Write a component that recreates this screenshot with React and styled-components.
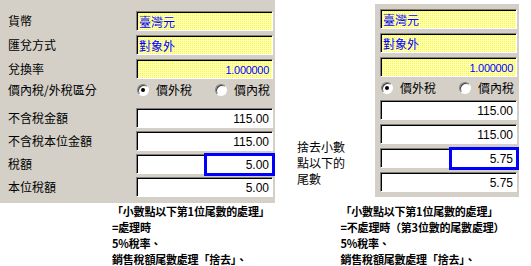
import React from "react";
import styled, { createGlobalStyle } from "styled-components";

const GlobalStyle = createGlobalStyle`
  html, body { margin: 0; padding: 0; background: #ffffff; }
  body { font-family: "Noto Sans CJK TC", "Noto Sans", sans-serif; color: #000; }
`;

const Page = styled.div`
  width: 531px;
  height: 266px;
  overflow: hidden;
  background: #fff;
  display: flex;
  flex-direction: column;
`;

const Top = styled.div`
  display: flex;
  height: 203px;
  flex: none;
  align-items: flex-start;
`;

const Panel = styled.div`
  flex: none;
  background: #d4d0c8;
  width: ${(p) => p.$width}px;
  height: ${(p) => p.$height}px;
  margin-top: ${(p) => p.$offset}px;
  padding: ${(p) => p.$padTop}px 0 0 ${(p) => p.$padLeft}px;
  box-sizing: border-box;
  display: flex;
  flex-direction: column;
`;

const Group = styled.div`
  display: flex;
  flex-direction: column;
  gap: ${(p) => p.$gap}px;
  margin-top: ${(p) => p.$mt || 0}px;
`;

const Row = styled.div`
  display: grid;
  grid-template-columns: ${(p) => (p.$labelW ? `${p.$labelW}px 137px` : "137px")};
  align-items: center;
  height: ${(p) => p.$h || 20}px;
`;

const Label = styled.span`
  font-size: 12px;
  line-height: 14px;
  white-space: nowrap;
  color: #000;
`;

const Field = styled.div`
  position: relative;
  height: 20px;
  box-sizing: border-box;
  border-top: 1px solid #808080;
  border-left: 1px solid #808080;
  border-right: 1px solid #ffffff;
  border-bottom: 1px solid #ffffff;
  box-shadow: inset 1px 1px 0 #000000;
  background: ${(p) =>
    p.$yellow
      ? "linear-gradient(90deg, #ffffcc 50%, transparent 50%) 0 0 / 2px 2px, linear-gradient(#ffffcc 50%, #ffff00 50%) 0 0 / 2px 2px"
      : "#ffffff"};
  display: flex;
  align-items: center;
  justify-content: ${(p) => (p.$right ? "flex-end" : "flex-start")};
  padding: 1px 3px 0 2px;
`;

const FieldText = styled.span`
  position: relative;
  z-index: 1;
  color: ${(p) => (p.$blue ? "#0000ff" : "#000000")};
  font-family: ${(p) =>
    p.$num
      ? '"Liberation Sans", Arial, sans-serif'
      : '"Noto Sans CJK TC", sans-serif'};
  font-size: ${(p) => p.$size || 12}px;
  letter-spacing: ${(p) => p.$ls || 0}px;
  line-height: 14px;
  white-space: nowrap;
`;

const Highlight = styled.div`
  position: absolute;
  top: -2px;
  bottom: -3px;
  right: -3px;
  width: ${(p) => p.$w}px;
  box-sizing: border-box;
  border: 3px solid #0000ff;
  pointer-events: none;
`;

const RadioGroup = styled.div`
  display: flex;
  justify-content: space-between;
  align-items: center;
  padding: 0 3px 0 1px;
`;

const Option = styled.label`
  display: flex;
  align-items: center;
  gap: 7px;
  font-size: 12px;
  line-height: 14px;
  white-space: nowrap;
`;

const RadioCircle = styled.span`
  position: relative;
  flex: none;
  width: 12px;
  height: 12px;
  box-sizing: border-box;
  border-radius: 50%;
  background: #ffffff;
  border: 1px solid;
  border-color: #808080 #ffffff #ffffff #808080;
  box-shadow: inset 1px 1px 0 #404040;
  &::after {
    content: "";
    display: ${(p) => (p.$checked ? "block" : "none")};
    position: absolute;
    left: 3px;
    top: 3px;
    width: 4px;
    height: 4px;
    border-radius: 50%;
    background: #000;
  }
`;

const MidNote = styled.div`
  flex: none;
  width: 100px;
  box-sizing: border-box;
  padding: 139px 0 0 22px;
  font-size: 12px;
  line-height: 16px;
`;

const Bottom = styled.div`
  display: flex;
  padding-top: 0;
`;

const Note = styled.div`
  margin-left: ${(p) => p.$ml}px;
  font-size: 11px;
  font-weight: 700;
  line-height: 16px;
  white-space: nowrap;
  letter-spacing: -0.2px;
`;

const rows = [
  { label: "貨幣", text: "臺灣元", yellow: true, blue: true },
  { label: "匯兌方式", text: "對象外", yellow: true, blue: true },
  { label: "兌換率", text: "1.000000", yellow: true, blue: true, num: true, size: 11, ls: -0.3 },
];

function FormPanel({ labels, width, height, offset, padTop, padLeft, lowerTop, lowerGap, amounts, hlW }) {
  const labelW = labels ? 128 : 0;
  const lower = [
    { label: "不含稅金額", value: amounts[0] },
    { label: "不含稅本位金額", value: amounts[1] },
    { label: "稅額", value: amounts[2], hl: true },
    { label: "本位稅額", value: amounts[3] },
  ];
  return (
    <Panel $width={width} $height={height} $offset={offset} $padTop={padTop} $padLeft={padLeft}>
      <Group $gap={4}>
        {rows.map((r) => (
          <Row key={r.label} $labelW={labelW}>
            {labels && <Label>{r.label}</Label>}
            <Field $yellow={r.yellow} $right={r.num}>
              <FieldText $blue={r.blue} $num={r.num} $size={r.size} $ls={r.ls}>
                {r.text}
              </FieldText>
            </Field>
          </Row>
        ))}
      </Group>
      <Group $gap={0} $mt={2}>
        <Row $labelW={labelW} $h={18}>
          {labels && <Label>價內稅/外稅區分</Label>}
          <RadioGroup>
            <Option>
              <RadioCircle $checked />
              價外稅
            </Option>
            <Option>
              <RadioCircle />
              價內稅
            </Option>
          </RadioGroup>
        </Row>
      </Group>
      <Group $gap={lowerGap} $mt={lowerTop}>
        {lower.map((r) => (
          <Row key={r.label} $labelW={labelW}>
            {labels && <Label>{r.label}</Label>}
            <Field $right>
              {r.hl && <Highlight $w={hlW} />}
              <FieldText $num>{r.value}</FieldText>
            </Field>
          </Row>
        ))}
      </Group>
    </Panel>
  );
}

export default function App() {
  return (
    <>
      <GlobalStyle />
      <Page>
        <Top>
          <FormPanel
            labels
            width={275}
            height={203}
            offset={0}
            padTop={11}
            padLeft={8}
            lowerTop={9}
            lowerGap={3}
            amounts={["115.00", "115.00", "5.00", "5.00"]}
            hlW={71}
          />
          <MidNote>
            捨去小數
            <br />
            點以下的
            <br />
            尾數
          </MidNote>
          <FormPanel
            width={144}
            height={193}
            offset={4}
            padTop={5}
            padLeft={5}
            lowerTop={3}
            lowerGap={4}
            amounts={["115.00", "115.00", "5.75", "5.75"]}
            hlW={70}
          />
        </Top>
        <Bottom>
          <Note $ml={112}>
            「小數點以下第1位尾數的處理」
            <br />
            =處理時
            <br />
            5%稅率、
            <br />
            銷售稅額尾數處理「捨去」、
          </Note>
          <Note $ml={71}>
            「小數點以下第1位尾數的處理」
            <br />
            =不處理時（第3位數的尾數處理）
            <br />
            5%稅率、
            <br />
            銷售稅額尾數處理「捨去」、
          </Note>
        </Bottom>
      </Page>
    </>
  );
}
